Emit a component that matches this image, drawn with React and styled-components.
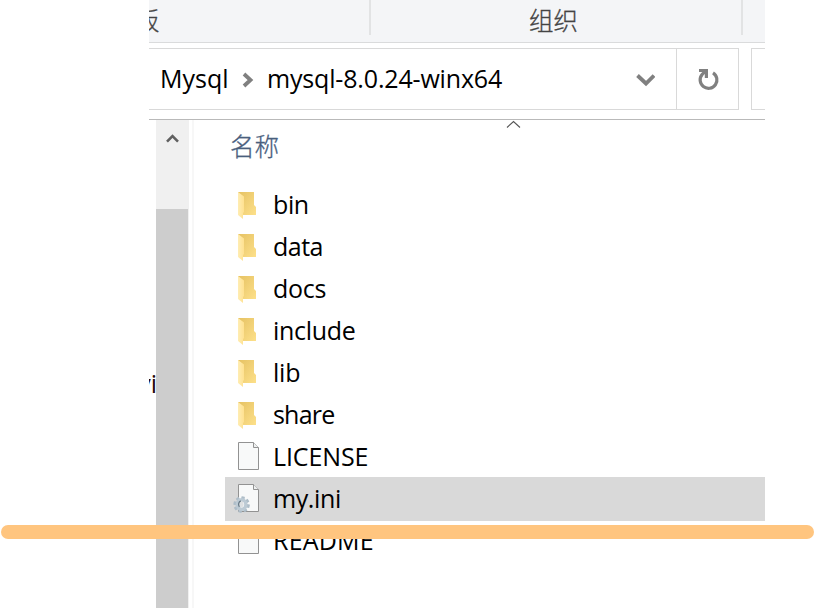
import React from "react";
import styled, { createGlobalStyle } from "styled-components";

const GlobalStyle = createGlobalStyle`
  * { box-sizing: border-box; }
  body { margin: 0; background: #fff; overflow: hidden; }
`;

const Page = styled.div`
  position: relative;
  width: 814px;
  height: 608px;
  padding: 0 49px 0 149px;
  overflow: hidden;
  background: #fff;
  color: #000;
  font-family: "Open Sans", "Noto Sans CJK SC", sans-serif;
  font-size: 24px;
  line-height: 30px;
`;

const Explorer = styled.div`
  display: flex;
  flex-direction: column;
  width: 616px;
  height: 608px;
  overflow: hidden;
`;

const Ribbon = styled.div`
  display: flex;
  flex: none;
  height: 43px;
  background: #f4f5f7;
  border-bottom: 1px solid #dadbdc;
`;

const RibbonGroup = styled.div`
  display: flex;
  flex: none;
  justify-content: ${(p) => (p.$start ? "flex-start" : "center")};
  width: ${(p) => p.$width}px;
  height: 35px;
  padding-top: 5px;
  border-right: ${(p) => (p.$last ? "none" : "2px solid #e2e3e4")};
  color: #444;
  white-space: nowrap;
`;

const RibbonLabel = styled.span`
  margin-left: ${(p) => p.$shift || 0}px;
  font-family: "Noto Sans CJK SC", sans-serif;
  font-size: 24.5px;
  font-weight: 300;
  -webkit-text-stroke: 0.3px #444;
`;

const AddressRow = styled.div`
  display: flex;
  flex: none;
  gap: 12px;
  height: 62px;
  margin-top: 5px;
`;

const AddressBar = styled.div`
  display: flex;
  flex: none;
  align-items: center;
  width: 590px;
  border: 1px solid #d9d9d9;
  border-left: none;
`;

const Crumbs = styled.div`
  display: flex;
  align-items: center;
  width: 486px;
  padding-left: 11px;
`;

const Text = styled.span`
  margin-bottom: 2px;
  font-size: 25px;
  letter-spacing: ${(p) => p.$track || 0}px;
  white-space: nowrap;
`;

const CrumbArrow = styled.svg`
  flex: none;
  width: 12px;
  height: 16px;
  margin: 1px 13.5px 0 13px;
`;

const DropArrow = styled.svg`
  flex: none;
  width: 20px;
  height: 14px;
  margin-top: 2px;
`;

const RefreshButton = styled.div`
  display: flex;
  align-items: center;
  justify-content: center;
  width: 62px;
  height: 60px;
  margin-left: auto;
  border-left: 1px solid #d9d9d9;
`;

const SearchBox = styled.div`
  flex: 1;
  border: 1px solid #d9d9d9;
  border-right: none;
`;

const Body = styled.div`
  display: flex;
  flex: 1;
  margin-top: 9px;
  border-top: 1px solid #b9b9b9;
`;

const NavEdge = styled.div`
  display: flex;
  justify-content: flex-end;
  width: 7px;
  padding-top: 248px;
  overflow: hidden;
  color: #240808;
`;

const NavText = styled(Text)`
  margin-right: -1px;
`;

const ScrollTrack = styled.div`
  display: flex;
  flex-direction: column;
  width: 33px;
  background: #f0f0f0;
`;

const ScrollUp = styled.svg`
  flex: none;
  width: 33px;
  height: 89px;
`;

const ScrollThumb = styled.div`
  flex: 1;
  width: 32px;
  background: #cdcdcd;
`;

const FilePane = styled.div`
  flex: 1;
  margin-left: 3px;
  border-left: 2px solid #f7f7f7;
  padding-left: 31px;
`;

const ColumnHeader = styled.div`
  display: flex;
  align-items: flex-start;
  height: 64px;
  padding-left: 5px;
  color: #4c607a;
`;

const ColumnLabel = styled.span`
  width: 276px;
  padding-top: 11px;
  font-family: "Noto Sans CJK SC", sans-serif;
  font-size: 24.5px;
  font-weight: 300;
  -webkit-text-stroke: 0.3px #465f86;
`;

const SortArrow = styled.svg`
  width: 15px;
  height: 9px;
`;

const FileRow = styled.div`
  display: flex;
  align-items: center;
  height: ${(p) => (p.$selected ? 44 : 42)}px;
  margin: ${(p) => (p.$selected ? "-1px 0" : "0")};
  background: ${(p) => (p.$selected ? "#d9d9d9" : "transparent")};
`;

const IconSlot = styled.div`
  width: 48px;
  height: 30px;
  padding-left: 9px;

  svg {
    display: block;
    overflow: visible;
  }
`;

const Marker = styled.div`
  position: absolute;
  left: 1px;
  top: 525px;
  width: 813px;
  height: 14px;
  border-radius: 7px;
  background: #ffc57f;
`;

function FolderIcon() {
  return (
    <svg width="26" height="30" viewBox="0 0 26 30">
      <defs>
        <linearGradient id="back" x1="0" y1="0" x2="1" y2="1">
          <stop offset="0" stopColor="#e6c263" />
          <stop offset="1" stopColor="#fde08a" />
        </linearGradient>
        <linearGradient id="front" x1="0" y1="0" x2="1" y2="0">
          <stop offset="0" stopColor="#ffedb3" />
          <stop offset="1" stopColor="#ffe190" />
        </linearGradient>
      </defs>
      <path d="M4 2h16v13l2 2v8H8z" fill="url(#back)" />
      <path d="M4 2l6 4.5v15.5l-1 1v6l-5-4z" fill="url(#front)" />
    </svg>
  );
}

const teeth = [0, 45, 90, 135, 180, 225, 270, 315];

function FileIcon({ gear }) {
  return (
    <svg width="26" height="30" viewBox="0 0 26 30">
      <path d="M4.5 0.5h15l5 5v22h-20z" fill="#f8f9f9" stroke="#929292" />
      <path d="M19.5 0.5v5h5" fill="#eef0f0" stroke="#929292" />
      {gear && (
        <g>
          {teeth.map((a) => (
            <rect key={a} x="5.9" y="12.4" width="3.4" height="5" rx="0.4" fill="#aebdc8" transform={`rotate(${a + 12} 7.6 20.6)`} />
          ))}
          <ellipse cx="7.6" cy="20.6" rx="4.3" ry="4.8" fill="none" stroke="#bccad4" strokeWidth="3.4" />
          <ellipse cx="7.2" cy="20.2" rx="2.4" ry="3" fill="#dde0e2" />
          <path d="M5.4 22.8a2.6 3.4 0 0 1 1.4-5.8" fill="none" stroke="#657784" strokeWidth="1.3" />
        </g>
      )}
    </svg>
  );
}

const files = [
  { name: "bin", kind: "folder", track: -0.4 },
  { name: "data", kind: "folder", track: -0.5 },
  { name: "docs", kind: "folder", track: -0.3 },
  { name: "include", kind: "folder", track: -0.3 },
  { name: "lib", kind: "folder", track: -0.2 },
  { name: "share", kind: "folder", track: -0.8 },
  { name: "LICENSE", kind: "file", track: -0.1 },
  { name: "my.ini", kind: "config", selected: true, track: -0.4 },
  { name: "README", kind: "file", track: 0.2 },
];

export default function App() {
  return (
    <Page>
      <GlobalStyle />
      <Explorer>
        <Ribbon>
          <RibbonGroup $width={222} $start>
            <RibbonLabel $shift={-14}>板</RibbonLabel>
          </RibbonGroup>
          <RibbonGroup $width={372}>
            <RibbonLabel $shift={-5}>组织</RibbonLabel>
          </RibbonGroup>
          <RibbonGroup $width={22} $last />
        </Ribbon>
        <AddressRow>
          <AddressBar>
            <Crumbs>
              <Text>Mysql</Text>
              <CrumbArrow viewBox="0 0 12 16">
                <path d="M2 2l6.5 6L2 14" fill="none" stroke="#808080" strokeWidth="3.8" />
              </CrumbArrow>
              <Text $track={-0.17}>mysql-8.0.24-winx64</Text>
            </Crumbs>
            <DropArrow viewBox="0 0 20 14">
              <path d="M2.5 2.5L11 10.5l8-8" fill="none" stroke="#808080" strokeWidth="3.8" />
            </DropArrow>
            <RefreshButton>
              <svg width="25" height="24" viewBox="0 0 25 24">
                <path d="M18 5.8A8.4 8.4 0 1 1 7.2 7.4L10 4.6" fill="none" stroke="#808080" strokeWidth="3.2" />
                <path d="M4 2h9v9H9.8V5H4z" fill="#808080" />
              </svg>
            </RefreshButton>
          </AddressBar>
          <SearchBox />
        </AddressRow>
        <Body>
          <NavEdge><NavText>vi</NavText></NavEdge>
          <ScrollTrack>
            <ScrollUp viewBox="0 0 33 89">
              <path d="M11 21.7l5.5-5.5 5.5 5.5" fill="none" stroke="#606060" strokeWidth="2.6" />
            </ScrollUp>
            <ScrollThumb />
          </ScrollTrack>
          <FilePane>
            <ColumnHeader>
              <ColumnLabel>名称</ColumnLabel>
              <SortArrow viewBox="0 0 15 9">
                <path d="M1 7.5l6.5-6 6.5 6" fill="none" stroke="#555" strokeWidth="1.1" />
              </SortArrow>
            </ColumnHeader>
            {files.map((f) => (
              <FileRow key={f.name} $selected={f.selected}>
                <IconSlot>
                  {f.kind === "folder" ? <FolderIcon /> : <FileIcon gear={f.kind === "config"} />}
                </IconSlot>
                <Text $track={f.track}>{f.name}</Text>
              </FileRow>
            ))}
          </FilePane>
        </Body>
      </Explorer>
      <Marker />
    </Page>
  );
}
